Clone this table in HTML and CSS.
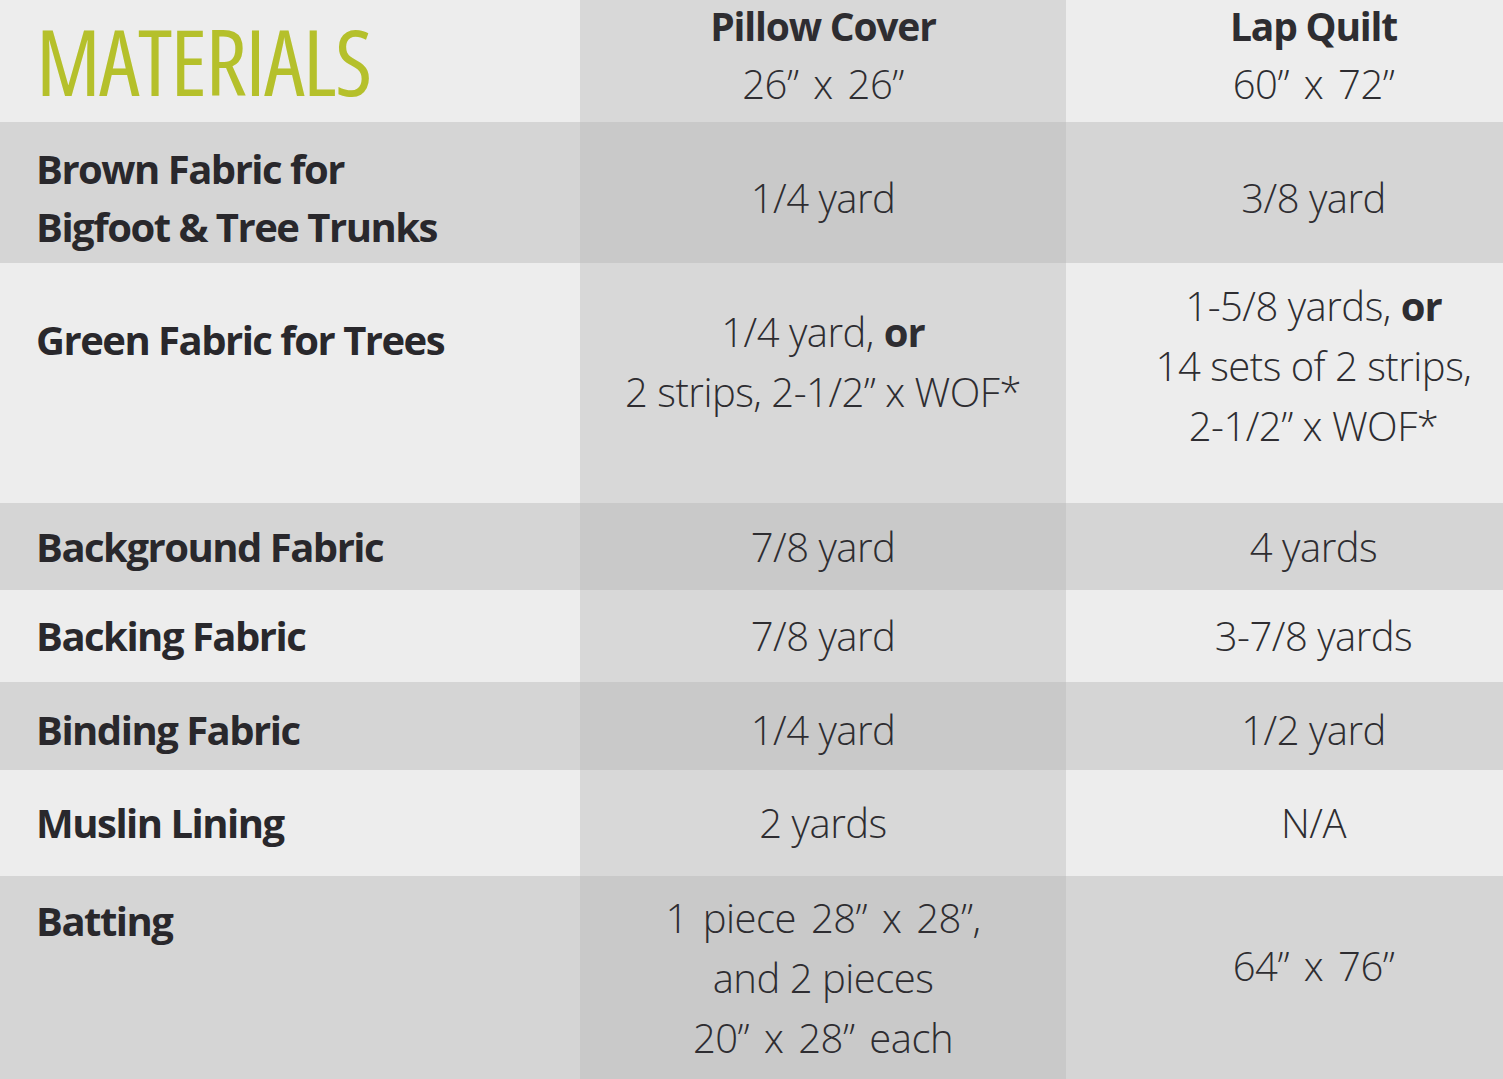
FILE: index.html
```html
<!DOCTYPE html>
<html lang="en">
<head>
<meta charset="utf-8">
<title>Materials</title>
<link rel="stylesheet" href="styles.css">
</head>
<body>
<div class="sheet">
  <div class="row r-head">
    <div class="cell c-label"><h1 class="title">MATERIALS</h1></div>
    <div class="cell c-mid head"><span class="hname">Pillow Cover</span><span class="dim">26” x 26”</span></div>
    <div class="cell c-right head"><span class="hname">Lap Quilt</span><span class="dim">60” x 72”</span></div>
  </div>
  <div class="row shade r-brown">
    <div class="cell c-label"><span>Brown Fabric for</span><span>Bigfoot &amp; Tree Trunks</span></div>
    <div class="cell c-mid"><span>1/4 yard</span></div>
    <div class="cell c-right"><span>3/8 yard</span></div>
  </div>
  <div class="row r-green">
    <div class="cell c-label top"><span>Green Fabric for Trees</span></div>
    <div class="cell c-mid"><span>1/4 yard, <b>or</b></span><span>2 strips, 2-1/2” x WOF*</span></div>
    <div class="cell c-right"><span>1-5/8 yards, <b>or</b></span><span>14 sets of 2 strips,</span><span>2-1/2” x WOF*</span></div>
  </div>
  <div class="row shade r-bg">
    <div class="cell c-label"><span>Background Fabric</span></div>
    <div class="cell c-mid"><span>7/8 yard</span></div>
    <div class="cell c-right"><span>4 yards</span></div>
  </div>
  <div class="row r-backing">
    <div class="cell c-label"><span>Backing Fabric</span></div>
    <div class="cell c-mid"><span>7/8 yard</span></div>
    <div class="cell c-right"><span>3-7/8 yards</span></div>
  </div>
  <div class="row shade r-binding">
    <div class="cell c-label"><span>Binding Fabric</span></div>
    <div class="cell c-mid"><span>1/4 yard</span></div>
    <div class="cell c-right"><span>1/2 yard</span></div>
  </div>
  <div class="row r-muslin">
    <div class="cell c-label"><span>Muslin Lining</span></div>
    <div class="cell c-mid"><span>2 yards</span></div>
    <div class="cell c-right"><span>N/A</span></div>
  </div>
  <div class="row shade r-batting">
    <div class="cell c-label top"><span>Batting</span></div>
    <div class="cell c-mid"><span class="dim">1 piece 28” x 28”,</span><span>and 2 pieces</span><span class="dim">20” x 28” each</span></div>
    <div class="cell c-right raise"><span class="dim">64” x 76”</span></div>
  </div>
</div>
</body>
</html>
```
FILE: styles.css
```css
html, body {
  margin: 0;
  padding: 0;
  background: #ededed;
}

.sheet {
  width: 1503px;
  height: 1079px;
  overflow: hidden;
  display: flex;
  flex-direction: column;
  color: #2e2d31;
}

.row {
  display: grid;
  grid-template-columns: 580px 486px 437px;
  flex: none;
}

.cell {
  display: flex;
  flex-direction: column;
  justify-content: center;
  box-sizing: border-box;
}

.c-label {
  background: #ededed;
  padding-left: 36px;
  font-family: "Open Sans", "DejaVu Sans", sans-serif;
  font-weight: 700;
  font-stretch: 88%;
  font-size: 40px;
  letter-spacing: -1.5px;
  line-height: 58px;
  color: #29282c;
}

.c-mid,
.c-right {
  align-items: center;
  text-align: center;
  font-family: "Open Sans", "DejaVu Sans", sans-serif;
  font-weight: 300;
  font-stretch: 92%;
  font-size: 40px;
  letter-spacing: -0.5px;
  line-height: 60px;
  white-space: nowrap;
}

.c-mid { background: #d8d8d8; }
.c-right { background: #ededed; padding-left: 58px; }

.shade .c-label,
.shade .c-right { background: #d5d5d5; }
.shade .c-mid { background: #c9c9c9; }

.c-mid b,
.c-right b { font-weight: 700; letter-spacing: -1px; }

.dim { word-spacing: 5px; }

/* header */
.r-head { height: 122px; }
.r-head .c-label { justify-content: center; padding-left: 36px; }
.title {
  margin: 0;
  font-family: "Open Sans", "Roboto", sans-serif;
  font-stretch: 75%;
  font-weight: 500;
  font-size: 91px;
  line-height: 120px;
  letter-spacing: -1.5px;
  color: #b5c02b;
}
.head {
  justify-content: flex-start;
  line-height: 58px;
}
.head > span:first-child { margin-top: -3px; }
.hname {
  font-weight: 700;
  font-stretch: 88%;
  font-size: 39px;
  letter-spacing: -1.2px;
}

/* rows */
.r-brown { height: 141px; }
.r-brown .cell { padding-top: 10px; }

.r-green { height: 240px; }
.r-green .c-mid { padding-bottom: 42px; }
.r-green .c-right { padding-bottom: 34px; }
.r-green .c-label { justify-content: flex-start; padding-top: 48px; }

.r-bg { height: 87px; }
.r-backing { height: 92px; }
.r-binding { height: 88px; }
.r-binding .cell { padding-top: 8px; }
.r-muslin { height: 106px; }

.r-batting { height: 203px; }
.r-batting .c-label { justify-content: flex-start; padding-top: 16px; }
.r-batting .raise { padding-bottom: 24px; }
```
